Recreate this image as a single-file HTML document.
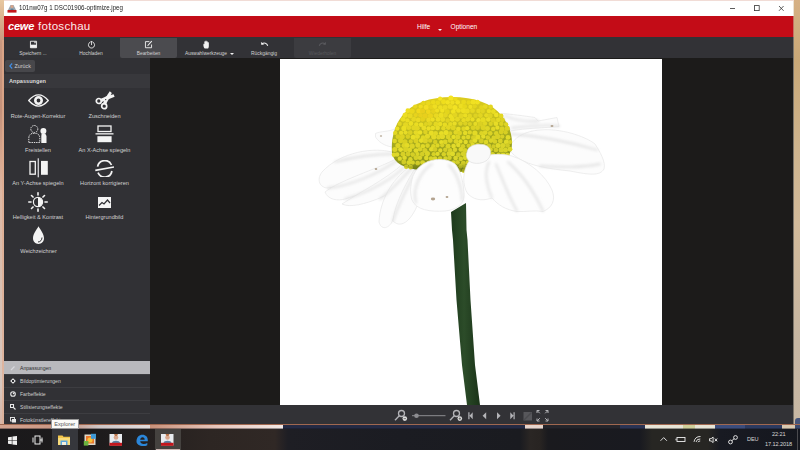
<!DOCTYPE html>
<html lang="de">
<head>
<meta charset="utf-8">
<title>101nw07g 1 DSC01906-optimize.jpeg</title>
<style>
*{margin:0;padding:0;box-sizing:border-box}
html,body{width:800px;height:450px;overflow:hidden}
body{position:relative;font-family:"Liberation Sans",sans-serif;background:#d9b48c;color:#fff}
.abs{position:absolute}
#desk-l{left:0;top:0;width:5px;height:428px;background:linear-gradient(#e8c8a0 0%,#d8ac8c 5%,#c89880 10%,#c4917a 26%,#d8aa92 38%,#deb8a4 45%,#d8c0b2 66%,#d8c8c0 90%,#d8b4a4 100%)}
#desk-r{left:793px;top:0;width:7px;height:428px;background:linear-gradient(#d6b084 0%,#c9a877 14%,#ceb48e 35%,#d2ba9a 52%,#c6b6a2 80%,#c8b8a4 100%)}
#desk-t{left:4px;top:0;width:790px;height:2px;background:#f1dcd6}
#desk-b{left:0;top:424px;width:800px;height:5px;z-index:3}
#tip{z-index:4}
#win{left:4px;top:1px;width:789px;height:423px;background:#1c1b1a;overflow:hidden}
#title{left:0;top:0;width:790px;height:15px;background:#fff;color:#222;font-size:7.6px;line-height:15px}
#title .t{left:15px;top:0;white-space:nowrap;transform-origin:0 50%;transform:scaleX(0.87);font-size:7.1px}
#red{left:0;top:15px;width:790px;height:21px;background:#c30c17}
#tool{left:0;top:36px;width:790px;height:21px;background:#323236}
.tb{top:0;height:21px;width:58px;text-align:center;font-size:5.4px;color:#d2d2d2}
.tb span{position:absolute;left:0;right:0;top:13px;line-height:7px;font-size:4.900px}
.tb svg{position:absolute;left:24.500px;top:2.500px;width:9px;height:9px}
#panel{left:0;top:57px;width:146px;height:366px;background:#313135}
#canvas{left:146px;top:57px;width:644px;height:347px;background:#1c1b1a}
#img{left:276px;top:58px;width:382px;height:346px;background:#fff}
#bbar{left:146px;top:404px;width:644px;height:19px;background:#323236}
#task{left:0;top:428px;width:800px;height:22px;background:linear-gradient(90deg,#1a191b 0,#1d1b1c 100px,#262120 160px,#2d2623 210px,#302825 275px,#1e1e24 288px,#1b1c22 400px,#1a1b20 520px,#2a2624 530px,#282422 540px,#1a1a1e 548px,#191a20 640px,#272623 652px,#272623 708px,#181a22 720px,#15171e 800px)}
.lbl{font-size:5.6px;color:#d2d2d2;white-space:nowrap;text-align:center;width:73px;line-height:7px}
.row{left:0;width:146px;height:13px;border-top:1px solid #3d3d41;font-size:5.1px;line-height:12px;color:#cecece;padding-left:16px}

.logo1{left:4px;top:3px;font-weight:bold;font-style:italic;font-size:11px;line-height:14px;letter-spacing:-0.2px}
.logo2{left:34px;top:2.5px;font-size:11.6px;line-height:14px;letter-spacing:0.25px;color:#fbeaea}
.menu{top:6.5px;font-size:6.6px;line-height:8px;color:#fff}
.arr{width:0;height:0;border-left:2px solid transparent;border-right:2px solid transparent;border-top:2.200px solid #f0f0f0}
.tb.on{background:#4b4b4f;top:1px;height:20px;border-radius:0 0 2px 2px}
.tb.on svg{top:1.500px;left:24px}.tb.on span{top:12px}
.tb.off{background:#3c3c40;top:1px;height:20px;border-radius:0 0 2px 2px;color:#58585c}
.tb.off svg{top:1.500px;left:24px}.tb.off span{top:12px}

.back{left:1px;top:2px;width:30px;height:12px;background:#47474b;border-radius:2px;font-size:5.400px;line-height:7px;color:#cfcfd2}
.hdr{left:0;top:16px;width:146px;height:14px;background:#38383c;font-size:5.600px;font-weight:bold;line-height:7px;color:#dcdcdc}
.row.sel{background:#b9b9bd;color:#2c2c30;border-top-color:#b9b9bd}

.tt{font-size:5.600px;line-height:7px;color:#d6d6d6;white-space:nowrap;letter-spacing:-0.100px}
#tip{left:51px;top:419px;width:27.500px;height:9.500px;background:#fbfbf8;border:0.500px solid #9a9a9a;color:#555;font-size:5.600px;line-height:8px;text-align:center}
</style>
</head>
<body>
<div id="desk-l" class="abs"></div>
<div id="desk-r" class="abs"></div><div class="abs" style="left:795px;top:418px;width:5px;height:8px;background:#46557a;border-radius:3px 0 0 0"></div>
<div id="desk-t" class="abs"></div>
<div class="abs" style="left:793px;top:1px;width:1px;height:423px;background:linear-gradient(#ece2d4 0,#ece2d4 15px,#c47264 15px,#c47264 36px,#7c766c 36px)"></div>
<div class="abs" style="left:2px;top:40px;width:2px;height:384px;background:linear-gradient(rgba(224,168,136,.7),rgba(222,176,152,.8))"></div>
<svg id="desk-b" class="abs" viewBox="0 424 800 5" preserveAspectRatio="none">
<defs><linearGradient id="sg1" x1="0" x2="1"><stop offset="0" stop-color="#d3a38f"/><stop offset="0.45" stop-color="#c99683"/><stop offset="0.66" stop-color="#cfc6c6"/><stop offset="1" stop-color="#e3dcdc"/></linearGradient>
<linearGradient id="sg2" x1="0" x2="1"><stop offset="0" stop-color="#c8917a"/><stop offset="0.5" stop-color="#e7c6bc"/><stop offset="1" stop-color="#f3e9e6"/></linearGradient></defs>
<rect x="0" y="424" width="800" height="5" fill="#a06850"/>
<rect x="0" y="425" width="150" height="4" fill="url(#sg1)"/>
<rect x="150" y="425" width="133" height="4" fill="url(#sg2)"/>
<rect x="283" y="425" width="242" height="4" fill="#242a44"/>
<rect x="525" y="425" width="18" height="4" fill="#e6d4cc"/>
<rect x="543" y="425" width="77" height="4" fill="#25252b"/>
<rect x="620" y="425" width="25" height="4" fill="#2a3354"/>
<rect x="645" y="425" width="70" height="4" fill="#e7e4d6"/>
<rect x="683" y="425" width="12" height="4" fill="#cfcf9a"/>
<rect x="715" y="425" width="30" height="4" fill="#3b4c7c"/>
<rect x="745" y="425" width="37" height="4" fill="#2c3a60"/>
<rect x="782" y="425" width="13" height="4" fill="#d9c9b0"/>
<rect x="795" y="425" width="5" height="4" fill="#3a4a70"/>
<rect x="0" y="428.600" width="800" height="1" fill="#15161c"/>
</svg>
<div id="win" class="abs">
  <div id="title" class="abs">
    <svg class="abs" style="left:3px;top:3px;width:10px;height:9px" viewBox="0 0 10 9"><rect x="0.5" y="6" width="9" height="2.6" fill="#c4161c"/><path d="M1 6 L3.5 1 L6.5 1 L9 6 Z" fill="#9aa4ad"/><circle cx="5" cy="2.6" r="1.5" fill="#d8a58a"/><path d="M3 6 Q5 3 7 6Z" fill="#5c7c96"/></svg>
    <span class="abs t">101nw07g 1 DSC01906-optimize.jpeg</span>
    <svg class="abs" style="left:722px;top:0;width:68px;height:15px" viewBox="0 0 68 15"><g stroke="#333" stroke-width="0.8" fill="none"><path d="M4 7.5h5"/><rect x="28.4" y="4.6" width="4.8" height="5"/><path d="M53 5l4.6 4.8M57.6 5L53 9.8"/></g></svg>
  </div>
  <div id="red" class="abs">
    <span class="abs logo1">cewe</span><span class="abs logo2">fotoschau</span>
    <span class="abs menu" style="left:413px">Hilfe</span>
    <span class="abs arr" style="left:433.5px;top:12.5px"></span>
    <span class="abs menu" style="left:446.5px">Optionen</span>
  </div>
  <div id="tool" class="abs">
    <div class="abs tb" style="left:0">
      <svg viewBox="0 0 10 10"><path d="M1.6 1.4h6.8v7.2H1.6z" fill="none" stroke="#f2f2f2" stroke-width="1"/><rect x="1.6" y="5.2" width="6.8" height="3.4" fill="#f2f2f2"/><rect x="6" y="1.6" width="1.4" height="2" fill="#f2f2f2"/></svg>
      <span>Speichern ...</span></div>
    <div class="abs tb" style="left:58px">
      <svg viewBox="0 0 10 10"><path d="M3.2 2.6A3.4 3.4 0 1 0 6.8 2.6" fill="none" stroke="#f2f2f2" stroke-width="1"/><path d="M5 5.6V1.4M3.4 2.8L5 1.1l1.6 1.7" fill="none" stroke="#f2f2f2" stroke-width="0.9"/></svg>
      <span>Hochladen</span></div>
    <div class="abs tb on" style="left:116px;width:57px">
      <svg viewBox="0 0 10 10"><path d="M6 1.8H1.6v6.8h6.8V5" fill="none" stroke="#f2f2f2" stroke-width="1"/><path d="M4 6.4L8.6 1.2" stroke="#f2f2f2" stroke-width="1.2"/></svg>
      <span>Bearbeiten</span></div>
    <div class="abs tb" style="left:173px">
      <svg viewBox="0 0 10 10"><path d="M3 9.4C1.6 7.6 1.4 6 1.6 4.6c.3-.6.9-.4 1 .2V2c.1-.8 1.1-.8 1.2 0V1.200c.1-.8 1.200-.8 1.300 0V2c.1-.8 1.200-.8 1.300 0v1c.1-.7 1.100-.7 1.200 0V7c0 1-.4 1.800-.8 2.400z" fill="#f2f2f2"/></svg>
      <span>Auswahlwerkzeuge</span><i class="abs arr" style="left:52.5px;top:16px"></i></div>
    <div class="abs tb" style="left:231px">
      <svg viewBox="0 0 10 10"><path d="M2.200 4.200C4.600 2.600 7.600 3.400 8.600 6.400" fill="none" stroke="#f2f2f2" stroke-width="1.2"/><path d="M1 2.200l.6 3.400 3.200-1z" fill="#f2f2f2"/></svg>
      <span>Rückgängig</span></div>
    <div class="abs tb off" style="left:290px;width:57px">
      <svg viewBox="0 0 10 10"><path d="M7.800 4.200C5.400 2.600 2.400 3.400 1.400 6.400" fill="none" stroke="#5a5a5e" stroke-width="1.2"/><path d="M9 2.200l-.6 3.400-3.200-1z" fill="#5a5a5e"/></svg>
      <span>Wiederholen</span></div>
  </div>
  <div id="canvas" class="abs"></div>
  <div id="img" class="abs"><svg class="abs" style="left:0;top:0;width:382px;height:346px" viewBox="280 59 382 346">
<defs>
<radialGradient id="gy" cx="0.34" cy="0.22" r="0.85"><stop offset="0" stop-color="#f4e01c"/><stop offset="0.3" stop-color="#e6d820"/><stop offset="0.62" stop-color="#cdc824"/><stop offset="1" stop-color="#a9ad22"/></radialGradient>
<linearGradient id="gs" x1="0" x2="1" y1="0" y2="0"><stop offset="0" stop-color="#1d3a1c"/><stop offset="0.45" stop-color="#2c4c29"/><stop offset="1" stop-color="#1a3318"/></linearGradient>
<linearGradient id="gm" x1="0.3" x2="0.6" y1="0" y2="1"><stop offset="0" stop-color="#fff" stop-opacity="0.050"/><stop offset="0.35" stop-color="#fff" stop-opacity="0.450"/><stop offset="1" stop-color="#fff" stop-opacity="1"/></linearGradient>
<filter id="bl" x="-10%" y="-10%" width="120%" height="120%"><feGaussianBlur stdDeviation="1.500"/></filter>
<linearGradient id="gg" x1="0" x2="0.150" y1="0" y2="1"><stop offset="0" stop-color="#e2cf1e"/><stop offset="0.300" stop-color="#cfc41f"/><stop offset="0.600" stop-color="#a8ac1f"/><stop offset="1" stop-color="#848e1b"/></linearGradient><filter id="bl4" x="-5%" y="-5%" width="110%" height="110%"><feGaussianBlur stdDeviation="0.650"/></filter><filter id="bl2" x="-10%" y="-10%" width="120%" height="120%"><feGaussianBlur stdDeviation="0.600"/></filter>
<filter id="bl3" x="-5%" y="-5%" width="110%" height="110%"><feTurbulence type="fractalNoise" baseFrequency="0.120" numOctaves="2" seed="7" result="n"/><feDisplacementMap in="SourceGraphic" in2="n" scale="4.500" xChannelSelector="R" yChannelSelector="G"/><feGaussianBlur stdDeviation="0.400"/></filter>
<pattern id="dots" width="4.600" height="4" patternUnits="userSpaceOnUse" patternTransform="rotate(-8)"><rect width="4.600" height="4" fill="#8e961a"/><circle cx="1.150" cy="1" r="1.450" fill="#e8de2c"/><circle cx="3.450" cy="3" r="1.450" fill="#dcd62a"/><circle cx="1.150" cy="5" r="1.450" fill="#e8de2c"/><circle cx="5.750" cy="1" r="1.450" fill="#e8de2c"/><circle cx="-1.150" cy="3" r="1.450" fill="#dcd62a"/></pattern>
<mask id="mk"><rect x="385" y="90" width="135" height="90" fill="url(#gm)"/></mask>
<clipPath id="cd"><path id="dome" d="M392 153C391 140 394 126 402 116C412 103 430 97 452 97C474 97 492 103 502 116C509 125 512 134 512 143C512 152 508 160 498 163L470 172L420 170C405 168 394 164 392 153Z"/></clipPath>
</defs>
<!-- stem -->
<path d="M451 212L466 203L466.500 230L467.500 240L470.500 300L475 365L480 405L467 405L462 365L456.500 300L453 240L452 230Z" fill="url(#gs)"/>
<!-- back petals -->
<g fill="#fcfcfc" stroke="#e6e6e6" stroke-width="0.700">
<path d="M375.500 133.500C380 131 390 132 395 128.500L394 147C388 147 380 144 375.500 137Z"/>
<path d="M502 113.500C510 114 525 116 535 117.500L538 121L557 117.500L559 126.500C545 128 525 128 511 131Z"/>
<path d="M510 148C512 138 525 131 540 130C560 128 585 136 595 144C600 152 606 162 604 169C600 176 590 175 570 171C550 169 530 166 518 158C512 154 510 151 510 148Z"/>
<path d="M395 153C375 146 340 152 322 172C316 180 320 188 328 188C350 186 380 172 398 160Z"/>
<path d="M398 158C375 170 340 180 325 192C328 200 338 201 345 199C370 192 395 178 406 165Z"/>
<path d="M404 163C385 180 360 192 342 204C350 208 365 204 380 198C398 190 410 176 414 166Z"/>
<path d="M408 168C392 180 380 200 379 222C381 230 388 229 392 222C398 205 408 185 416 170Z"/>
<path d="M414 170C402 190 394 208 393 221C398 226 404 225 410 218C418 208 422 195 422 175Z"/>
</g>
<!-- soft shading on back petals -->
<g filter="url(#bl)" fill="none" stroke="#dedede" stroke-width="1.800" stroke-linecap="round">
<path d="M328 188C350 186 378 174 398 160"/>
<path d="M345 199C370 192 395 178 406 165"/>
<path d="M380 199C392 190 402 178 412 168"/>
<path d="M393 221C398 205 408 186 416 171"/>
<path d="M511 134C540 136 570 142 597 150"/>
<path d="M540 166C560 167 580 168 600 164"/>
<path d="M512 128C528 126 545 124 559 126"/>
<path d="M505 116C515 120 528 122 538 121"/>
<path d="M335 162C350 158 372 154 394 154"/>
</g>
<!-- dome -->
<use href="#dome" fill="url(#gg)"/>
<g filter="url(#bl4)" id="florets"><circle cx="440.1" cy="98.7" r="2.12" fill="#f5e420"/><circle cx="450.9" cy="98.0" r="2.59" fill="#f5e420"/><circle cx="455.5" cy="99.1" r="2.14" fill="#ebda1e"/><circle cx="423.4" cy="103.0" r="2.13" fill="#e7d61c"/><circle cx="428.3" cy="103.3" r="2.33" fill="#ead91e"/><circle cx="433.2" cy="102.3" r="2.26" fill="#ecdb1e"/><circle cx="437.8" cy="102.8" r="2.29" fill="#eada1e"/><circle cx="443.5" cy="101.8" r="2.47" fill="#efde1f"/><circle cx="447.7" cy="102.2" r="2.22" fill="#f2e221"/><circle cx="452.4" cy="102.5" r="2.15" fill="#f0e020"/><circle cx="457.7" cy="102.3" r="2.32" fill="#f2e221"/><circle cx="463.6" cy="102.1" r="2.43" fill="#eada1f"/><circle cx="468.7" cy="102.5" r="2.16" fill="#e8d81f"/><circle cx="473.1" cy="102.1" r="2.52" fill="#f1e121"/><circle cx="477.4" cy="102.2" r="2.42" fill="#f1e121"/><circle cx="415.1" cy="106.6" r="2.13" fill="#e9d71d"/><circle cx="420.7" cy="106.6" r="2.12" fill="#f2dd1f"/><circle cx="426.2" cy="107.2" r="2.55" fill="#f3dd20"/><circle cx="431.2" cy="107.0" r="2.47" fill="#e6d21d"/><circle cx="434.9" cy="106.6" r="2.36" fill="#efde20"/><circle cx="440.3" cy="107.6" r="2.27" fill="#edde21"/><circle cx="445.1" cy="107.5" r="2.49" fill="#ebdb20"/><circle cx="450.2" cy="106.4" r="2.51" fill="#ecdc20"/><circle cx="454.9" cy="107.4" r="2.50" fill="#f2e222"/><circle cx="461.1" cy="106.1" r="2.53" fill="#edde21"/><circle cx="464.7" cy="106.5" r="2.36" fill="#e7d81f"/><circle cx="470.4" cy="106.9" r="2.10" fill="#efe022"/><circle cx="474.7" cy="106.3" r="2.13" fill="#e4d51f"/><circle cx="481.4" cy="107.5" r="2.35" fill="#e3d41f"/><circle cx="485.2" cy="106.6" r="2.42" fill="#e7d920"/><circle cx="490.7" cy="106.7" r="2.26" fill="#e4d620"/><circle cx="407.9" cy="110.8" r="2.45" fill="#eddd20"/><circle cx="412.2" cy="111.1" r="2.54" fill="#ebd81f"/><circle cx="418.8" cy="111.0" r="2.50" fill="#f1d91f"/><circle cx="422.6" cy="111.1" r="2.51" fill="#e9cf1c"/><circle cx="428.3" cy="111.8" r="2.43" fill="#efd61e"/><circle cx="433.4" cy="111.3" r="2.39" fill="#e6d21d"/><circle cx="437.1" cy="110.6" r="2.12" fill="#efde21"/><circle cx="442.3" cy="110.6" r="2.19" fill="#f0e122"/><circle cx="447.1" cy="111.7" r="2.52" fill="#e3d51f"/><circle cx="453.3" cy="111.7" r="2.39" fill="#f0e223"/><circle cx="458.5" cy="110.5" r="2.36" fill="#eedf22"/><circle cx="463.4" cy="110.6" r="2.57" fill="#eddf22"/><circle cx="467.2" cy="110.9" r="2.51" fill="#eadc22"/><circle cx="472.5" cy="110.7" r="2.41" fill="#e5d720"/><circle cx="478.5" cy="111.0" r="2.30" fill="#e6d821"/><circle cx="482.7" cy="111.1" r="2.35" fill="#e1d420"/><circle cx="488.9" cy="111.1" r="2.18" fill="#ebde23"/><circle cx="493.3" cy="111.6" r="2.36" fill="#eadd23"/><circle cx="405.2" cy="115.1" r="2.58" fill="#edde21"/><circle cx="410.1" cy="115.8" r="2.53" fill="#e9d920"/><circle cx="415.7" cy="115.1" r="2.11" fill="#e8d31e"/><circle cx="420.5" cy="115.3" r="2.28" fill="#e8d01d"/><circle cx="425.2" cy="115.9" r="2.60" fill="#e8cf1d"/><circle cx="430.5" cy="115.7" r="2.52" fill="#ead41f"/><circle cx="436.1" cy="115.6" r="2.46" fill="#e9d820"/><circle cx="441.1" cy="115.3" r="2.58" fill="#ecde23"/><circle cx="445.4" cy="115.1" r="2.46" fill="#e4d620"/><circle cx="450.8" cy="116.2" r="2.22" fill="#ede024"/><circle cx="454.9" cy="115.1" r="2.45" fill="#e3d520"/><circle cx="461.1" cy="116.1" r="2.53" fill="#e3d621"/><circle cx="465.2" cy="115.4" r="2.14" fill="#ebde23"/><circle cx="469.8" cy="116.0" r="2.28" fill="#e3d621"/><circle cx="475.6" cy="115.8" r="2.27" fill="#ded220"/><circle cx="480.4" cy="115.5" r="2.39" fill="#e2d521"/><circle cx="486.3" cy="115.3" r="2.16" fill="#e7da23"/><circle cx="490.1" cy="115.8" r="2.54" fill="#dfd321"/><circle cx="496.2" cy="114.9" r="2.29" fill="#ede025"/><circle cx="501.0" cy="115.9" r="2.44" fill="#e2d622"/><circle cx="403.1" cy="119.3" r="2.42" fill="#ebdd22"/><circle cx="407.4" cy="120.4" r="2.16" fill="#ebdd22"/><circle cx="413.8" cy="119.2" r="2.46" fill="#e6d720"/><circle cx="418.2" cy="119.9" r="2.33" fill="#ebda21"/><circle cx="422.7" cy="119.3" r="2.46" fill="#e4d11e"/><circle cx="428.5" cy="119.9" r="2.28" fill="#ecda22"/><circle cx="432.6" cy="119.6" r="2.12" fill="#edde23"/><circle cx="438.0" cy="119.4" r="2.28" fill="#ebde23"/><circle cx="442.7" cy="119.6" r="2.49" fill="#e7da23"/><circle cx="447.7" cy="120.4" r="2.24" fill="#e0d321"/><circle cx="452.3" cy="119.2" r="2.46" fill="#ebde24"/><circle cx="457.4" cy="119.3" r="2.47" fill="#e5d822"/><circle cx="463.6" cy="120.2" r="2.17" fill="#e7da23"/><circle cx="467.8" cy="119.3" r="2.38" fill="#e6da23"/><circle cx="472.5" cy="119.4" r="2.12" fill="#eadd24"/><circle cx="478.5" cy="120.4" r="2.29" fill="#ebe026"/><circle cx="483.1" cy="119.9" r="2.59" fill="#e6db24"/><circle cx="488.3" cy="119.5" r="2.34" fill="#eade25"/><circle cx="493.2" cy="120.2" r="2.49" fill="#dcd021"/><circle cx="498.3" cy="119.8" r="2.33" fill="#e4d924"/><circle cx="502.4" cy="119.8" r="2.35" fill="#dcd122"/><circle cx="399.7" cy="123.9" r="2.14" fill="#e3d621"/><circle cx="405.6" cy="124.8" r="2.54" fill="#e4d722"/><circle cx="410.9" cy="123.5" r="2.40" fill="#ecdf24"/><circle cx="416.3" cy="124.4" r="2.27" fill="#eadd24"/><circle cx="421.1" cy="124.8" r="2.32" fill="#ebdf25"/><circle cx="426.0" cy="124.1" r="2.12" fill="#dfd321"/><circle cx="429.7" cy="123.6" r="2.35" fill="#e0d421"/><circle cx="435.9" cy="124.2" r="2.42" fill="#e4d823"/><circle cx="440.1" cy="124.0" r="2.30" fill="#e9dd24"/><circle cx="444.9" cy="124.7" r="2.28" fill="#e8dc24"/><circle cx="450.3" cy="124.1" r="2.21" fill="#e6da24"/><circle cx="454.6" cy="123.6" r="2.17" fill="#e9dd25"/><circle cx="460.4" cy="123.6" r="2.19" fill="#dfd422"/><circle cx="465.3" cy="123.6" r="2.16" fill="#dcd121"/><circle cx="469.9" cy="124.1" r="2.11" fill="#dcd122"/><circle cx="475.4" cy="124.0" r="2.13" fill="#e6db25"/><circle cx="480.3" cy="123.9" r="2.58" fill="#dbd022"/><circle cx="485.0" cy="123.5" r="2.18" fill="#e2d724"/><circle cx="490.7" cy="123.9" r="2.13" fill="#dcd223"/><circle cx="495.9" cy="123.7" r="2.33" fill="#e7dc26"/><circle cx="501.3" cy="123.8" r="2.23" fill="#ded323"/><circle cx="506.1" cy="124.3" r="2.15" fill="#dfd524"/><circle cx="397.2" cy="128.6" r="2.20" fill="#ece025"/><circle cx="403.9" cy="128.4" r="2.56" fill="#eade24"/><circle cx="408.8" cy="127.7" r="2.40" fill="#e2d622"/><circle cx="413.8" cy="127.7" r="2.52" fill="#e2d622"/><circle cx="417.3" cy="128.2" r="2.44" fill="#e2d623"/><circle cx="423.8" cy="127.9" r="2.47" fill="#e8dc25"/><circle cx="428.6" cy="128.5" r="2.28" fill="#ebdf26"/><circle cx="432.8" cy="128.0" r="2.34" fill="#e8dd25"/><circle cx="437.6" cy="127.9" r="2.40" fill="#e7dc25"/><circle cx="443.4" cy="128.2" r="2.18" fill="#e3d824"/><circle cx="448.4" cy="127.6" r="2.48" fill="#e3d724"/><circle cx="453.3" cy="127.8" r="2.52" fill="#dfd423"/><circle cx="458.3" cy="129.0" r="2.32" fill="#e8dd26"/><circle cx="463.7" cy="128.8" r="2.29" fill="#dfd524"/><circle cx="467.2" cy="128.2" r="2.15" fill="#e9df27"/><circle cx="473.1" cy="127.8" r="2.42" fill="#dbd123"/><circle cx="477.5" cy="127.7" r="2.42" fill="#dcd223"/><circle cx="483.2" cy="127.6" r="2.58" fill="#ddd324"/><circle cx="487.5" cy="128.5" r="2.49" fill="#dfd625"/><circle cx="493.2" cy="128.9" r="2.19" fill="#e1d725"/><circle cx="497.4" cy="127.7" r="2.16" fill="#e6dc27"/><circle cx="502.1" cy="129.1" r="2.55" fill="#dbd224"/><circle cx="507.3" cy="128.3" r="2.51" fill="#dbd224"/><circle cx="395.2" cy="132.9" r="2.16" fill="#e3d823"/><circle cx="401.1" cy="132.9" r="2.20" fill="#e9dd25"/><circle cx="405.6" cy="132.6" r="2.14" fill="#e7dc25"/><circle cx="410.2" cy="132.7" r="2.38" fill="#dcd122"/><circle cx="415.9" cy="132.6" r="2.40" fill="#e5da25"/><circle cx="420.0" cy="132.5" r="2.27" fill="#ebe027"/><circle cx="425.4" cy="132.0" r="2.18" fill="#ded323"/><circle cx="431.3" cy="133.1" r="2.59" fill="#e8dd26"/><circle cx="435.7" cy="133.4" r="2.31" fill="#e2d825"/><circle cx="441.3" cy="133.3" r="2.34" fill="#e8de27"/><circle cx="446.0" cy="132.6" r="2.56" fill="#e9df27"/><circle cx="450.1" cy="133.4" r="2.15" fill="#dcd224"/><circle cx="455.9" cy="132.4" r="2.42" fill="#e1d725"/><circle cx="459.7" cy="133.1" r="2.32" fill="#ddd324"/><circle cx="465.2" cy="133.1" r="2.24" fill="#e4db27"/><circle cx="469.8" cy="132.4" r="2.14" fill="#dfd525"/><circle cx="474.9" cy="133.1" r="2.59" fill="#e3da27"/><circle cx="481.4" cy="133.3" r="2.18" fill="#ddd425"/><circle cx="485.2" cy="132.6" r="2.37" fill="#dfd726"/><circle cx="490.2" cy="133.3" r="2.33" fill="#dbd225"/><circle cx="496.2" cy="133.2" r="2.22" fill="#dbd325"/><circle cx="501.1" cy="131.9" r="2.37" fill="#d9d024"/><circle cx="505.6" cy="132.2" r="2.20" fill="#d7cf24"/><circle cx="397.9" cy="136.7" r="2.37" fill="#dbd022"/><circle cx="402.3" cy="136.7" r="2.50" fill="#ded323"/><circle cx="407.9" cy="136.6" r="2.31" fill="#dad022"/><circle cx="413.2" cy="137.3" r="2.50" fill="#e8de27"/><circle cx="417.5" cy="136.4" r="2.49" fill="#e5db26"/><circle cx="423.0" cy="137.5" r="2.24" fill="#e1d825"/><circle cx="427.4" cy="136.2" r="2.55" fill="#e3d926"/><circle cx="433.7" cy="136.9" r="2.56" fill="#e3d926"/><circle cx="438.6" cy="137.2" r="2.36" fill="#ded525"/><circle cx="442.4" cy="136.5" r="2.60" fill="#e3d926"/><circle cx="448.1" cy="136.9" r="2.33" fill="#ddd425"/><circle cx="453.5" cy="136.9" r="2.18" fill="#e6de28"/><circle cx="457.7" cy="137.0" r="2.53" fill="#ddd526"/><circle cx="463.6" cy="137.7" r="2.12" fill="#e0d827"/><circle cx="468.1" cy="137.1" r="2.24" fill="#ded626"/><circle cx="473.4" cy="137.7" r="2.43" fill="#d7cf25"/><circle cx="477.8" cy="137.0" r="2.58" fill="#e4dc28"/><circle cx="483.3" cy="136.5" r="2.19" fill="#e4dc29"/><circle cx="487.8" cy="137.5" r="2.24" fill="#dad226"/><circle cx="493.8" cy="137.7" r="2.30" fill="#dad226"/><circle cx="497.6" cy="136.4" r="2.59" fill="#d9d126"/><circle cx="502.2" cy="136.6" r="2.14" fill="#d8d026"/><circle cx="508.0" cy="137.4" r="2.42" fill="#e1da29"/><circle cx="394.7" cy="140.9" r="2.23" fill="#e0d725"/><circle cx="400.6" cy="140.6" r="2.58" fill="#dcd324"/><circle cx="404.9" cy="141.9" r="2.60" fill="#dad124"/><circle cx="410.8" cy="141.5" r="2.13" fill="#dad124"/><circle cx="416.0" cy="140.8" r="2.51" fill="#dbd124"/><circle cx="421.2" cy="140.6" r="2.37" fill="#e7de28"/><circle cx="425.3" cy="140.7" r="2.59" fill="#ddd425"/><circle cx="430.1" cy="140.7" r="2.16" fill="#d9d024"/><circle cx="435.2" cy="142.0" r="2.20" fill="#d7cf24"/><circle cx="441.3" cy="142.1" r="2.22" fill="#e5dd29"/><circle cx="445.2" cy="142.0" r="2.45" fill="#ddd526"/><circle cx="450.2" cy="140.5" r="2.47" fill="#dbd326"/><circle cx="456.0" cy="141.4" r="2.37" fill="#ddd527"/><circle cx="460.4" cy="141.4" r="2.20" fill="#e2db28"/><circle cx="465.7" cy="142.0" r="2.19" fill="#e2db29"/><circle cx="471.3" cy="141.8" r="2.23" fill="#d7cf26"/><circle cx="475.0" cy="140.6" r="2.30" fill="#e4dd29"/><circle cx="481.2" cy="140.7" r="2.53" fill="#d4cd25"/><circle cx="486.0" cy="142.1" r="2.36" fill="#ded728"/><circle cx="491.0" cy="140.6" r="2.32" fill="#dcd528"/><circle cx="494.9" cy="141.5" r="2.35" fill="#d8d127"/><circle cx="500.3" cy="141.0" r="2.40" fill="#d9d227"/><circle cx="506.4" cy="142.0" r="2.52" fill="#e0da2a"/><circle cx="510.1" cy="142.1" r="2.16" fill="#d6d027"/><circle cx="397.9" cy="145.6" r="2.54" fill="#dfd626"/><circle cx="403.9" cy="145.6" r="2.41" fill="#ddd526"/><circle cx="407.2" cy="145.5" r="2.49" fill="#e4db28"/><circle cx="412.2" cy="146.2" r="2.59" fill="#dcd426"/><circle cx="417.8" cy="145.1" r="2.54" fill="#ded627"/><circle cx="422.9" cy="146.2" r="2.28" fill="#e0d928"/><circle cx="427.6" cy="145.6" r="2.29" fill="#dbd426"/><circle cx="433.3" cy="146.2" r="2.17" fill="#ded627"/><circle cx="437.5" cy="145.4" r="2.17" fill="#ded728"/><circle cx="442.2" cy="145.3" r="2.11" fill="#d9d126"/><circle cx="448.1" cy="146.3" r="2.47" fill="#dcd528"/><circle cx="453.6" cy="146.1" r="2.32" fill="#e2db2a"/><circle cx="458.3" cy="145.0" r="2.29" fill="#e2db29"/><circle cx="463.0" cy="146.2" r="2.19" fill="#d7d127"/><circle cx="468.6" cy="145.8" r="2.11" fill="#d4ce26"/><circle cx="472.7" cy="144.8" r="2.19" fill="#e0da29"/><circle cx="477.6" cy="145.4" r="2.32" fill="#dbd428"/><circle cx="483.2" cy="145.9" r="2.15" fill="#d9d328"/><circle cx="488.9" cy="145.9" r="2.32" fill="#d3cd26"/><circle cx="493.5" cy="146.4" r="2.10" fill="#d2cc26"/><circle cx="498.0" cy="145.5" r="2.51" fill="#e0da2a"/><circle cx="502.7" cy="145.5" r="2.54" fill="#dad529"/><circle cx="507.5" cy="145.4" r="2.42" fill="#d2cd27"/><circle cx="394.8" cy="149.5" r="2.53" fill="#ddd527"/><circle cx="400.6" cy="149.6" r="2.43" fill="#e5dd29"/><circle cx="405.6" cy="149.4" r="2.55" fill="#d9d226"/><circle cx="409.8" cy="150.0" r="2.28" fill="#ded728"/><circle cx="416.0" cy="150.6" r="2.47" fill="#e1da29"/><circle cx="420.0" cy="149.2" r="2.26" fill="#dbd427"/><circle cx="424.9" cy="150.5" r="2.51" fill="#d7d026"/><circle cx="431.3" cy="149.3" r="2.30" fill="#e2db2a"/><circle cx="435.0" cy="149.4" r="2.35" fill="#d4cd25"/><circle cx="440.3" cy="150.5" r="2.13" fill="#e0d92a"/><circle cx="445.3" cy="149.7" r="2.23" fill="#d5cf26"/><circle cx="450.1" cy="150.2" r="2.16" fill="#d7d127"/><circle cx="455.0" cy="149.8" r="2.22" fill="#dbd529"/><circle cx="460.9" cy="149.4" r="2.40" fill="#dcd629"/><circle cx="464.9" cy="150.3" r="2.37" fill="#d7d228"/><circle cx="470.7" cy="150.1" r="2.13" fill="#d8d228"/><circle cx="476.0" cy="150.5" r="2.39" fill="#d8d329"/><circle cx="480.1" cy="150.5" r="2.21" fill="#dbd62a"/><circle cx="486.1" cy="150.7" r="2.60" fill="#d5d028"/><circle cx="490.5" cy="149.4" r="2.27" fill="#dbd62a"/><circle cx="495.9" cy="150.0" r="2.36" fill="#d1cc27"/><circle cx="501.1" cy="149.9" r="2.53" fill="#d8d32a"/><circle cx="505.4" cy="149.9" r="2.51" fill="#d8d42a"/><circle cx="510.0" cy="149.2" r="2.38" fill="#dbd72b"/><circle cx="393.9" cy="154.7" r="2.25" fill="#dfd829"/><circle cx="397.1" cy="154.5" r="2.28" fill="#dfd829"/><circle cx="403.0" cy="154.3" r="2.45" fill="#d7d027"/><circle cx="408.1" cy="154.0" r="2.38" fill="#d4ce26"/><circle cx="412.7" cy="154.6" r="2.30" fill="#d5cf27"/><circle cx="417.5" cy="154.1" r="2.15" fill="#dbd528"/><circle cx="422.2" cy="154.2" r="2.35" fill="#d5cf27"/><circle cx="427.4" cy="153.6" r="2.56" fill="#dad428"/><circle cx="433.7" cy="154.2" r="2.13" fill="#d8d228"/><circle cx="437.6" cy="153.9" r="2.16" fill="#e0da2b"/><circle cx="443.8" cy="154.2" r="2.23" fill="#d8d228"/><circle cx="448.8" cy="153.7" r="2.36" fill="#dad429"/><circle cx="452.5" cy="153.8" r="2.50" fill="#e0db2b"/><circle cx="458.4" cy="154.8" r="2.45" fill="#d1cc27"/><circle cx="463.5" cy="153.8" r="2.59" fill="#d7d229"/><circle cx="467.7" cy="154.6" r="2.43" fill="#d2cd28"/><circle cx="472.6" cy="154.2" r="2.54" fill="#d5d029"/><circle cx="478.4" cy="154.2" r="2.31" fill="#dad52b"/><circle cx="483.5" cy="153.8" r="2.39" fill="#d7d32a"/><circle cx="487.8" cy="153.5" r="2.42" fill="#d1cd28"/><circle cx="492.5" cy="154.6" r="2.58" fill="#d6d22a"/><circle cx="498.6" cy="154.6" r="2.12" fill="#d4d029"/><circle cx="503.1" cy="154.6" r="2.20" fill="#ddd92c"/><circle cx="507.4" cy="155.0" r="2.34" fill="#dad62b"/><circle cx="399.8" cy="158.7" r="2.17" fill="#dfda2a"/><circle cx="404.6" cy="157.8" r="2.30" fill="#ded82a"/><circle cx="410.4" cy="159.3" r="2.23" fill="#dad529"/><circle cx="415.9" cy="157.7" r="2.45" fill="#d5d028"/><circle cx="419.9" cy="157.8" r="2.26" fill="#d9d329"/><circle cx="426.3" cy="157.9" r="2.29" fill="#ddd82a"/><circle cx="431.0" cy="158.4" r="2.26" fill="#dad52a"/><circle cx="435.0" cy="158.4" r="2.27" fill="#dcd72b"/><circle cx="440.0" cy="158.4" r="2.26" fill="#d1cc28"/><circle cx="445.6" cy="158.6" r="2.25" fill="#d8d42a"/><circle cx="449.6" cy="157.7" r="2.20" fill="#d4d029"/><circle cx="455.6" cy="158.1" r="2.40" fill="#dbd62b"/><circle cx="460.8" cy="158.9" r="2.31" fill="#d6d22a"/><circle cx="465.2" cy="157.8" r="2.35" fill="#dbd72b"/><circle cx="469.8" cy="159.2" r="2.41" fill="#d7d32a"/><circle cx="475.4" cy="157.9" r="2.18" fill="#deda2c"/><circle cx="480.3" cy="159.3" r="2.35" fill="#d0cc28"/><circle cx="485.5" cy="158.1" r="2.31" fill="#ddd92c"/><circle cx="489.6" cy="158.5" r="2.45" fill="#ceca28"/><circle cx="496.2" cy="159.1" r="2.44" fill="#cfcb28"/><circle cx="500.1" cy="158.5" r="2.25" fill="#d3cf29"/><circle cx="504.8" cy="158.7" r="2.58" fill="#cfcb28"/><circle cx="509.7" cy="159.2" r="2.14" fill="#d1cd29"/><circle cx="403.8" cy="162.0" r="2.44" fill="#d1cc27"/><circle cx="408.8" cy="162.7" r="2.38" fill="#dad62a"/><circle cx="412.8" cy="162.7" r="2.11" fill="#d8d42a"/><circle cx="417.7" cy="163.2" r="2.34" fill="#d3ce29"/><circle cx="422.6" cy="162.6" r="2.47" fill="#d9d52b"/><circle cx="428.8" cy="162.8" r="2.27" fill="#d1cd29"/><circle cx="432.2" cy="162.4" r="2.41" fill="#d7d32a"/><circle cx="437.5" cy="162.3" r="2.19" fill="#d0cc28"/><circle cx="443.0" cy="162.4" r="2.38" fill="#dcd82c"/><circle cx="447.7" cy="162.7" r="2.47" fill="#cfcb28"/><circle cx="453.5" cy="162.6" r="2.24" fill="#dad62b"/><circle cx="457.5" cy="162.4" r="2.40" fill="#d1cd29"/><circle cx="463.3" cy="163.2" r="2.48" fill="#d0cc28"/><circle cx="468.0" cy="162.6" r="2.32" fill="#d6d22a"/><circle cx="472.5" cy="162.6" r="2.46" fill="#d8d42b"/><circle cx="478.7" cy="162.3" r="2.50" fill="#dcd82c"/><circle cx="483.4" cy="163.6" r="2.49" fill="#d0cc28"/><circle cx="488.7" cy="162.2" r="2.57" fill="#d8d42a"/><circle cx="492.6" cy="163.4" r="2.32" fill="#ddd92c"/><circle cx="497.4" cy="162.3" r="2.31" fill="#dbd72c"/><circle cx="502.7" cy="162.7" r="2.23" fill="#ddd92c"/><circle cx="507.1" cy="163.5" r="2.29" fill="#d3cf29"/><circle cx="406.2" cy="166.8" r="2.21" fill="#d3cf29"/><circle cx="410.6" cy="167.2" r="2.35" fill="#d4d02a"/><circle cx="426.1" cy="166.4" r="2.20" fill="#d2ce29"/><circle cx="429.9" cy="167.8" r="2.56" fill="#dcd82c"/><circle cx="435.6" cy="166.5" r="2.13" fill="#d5d12a"/><circle cx="441.2" cy="166.7" r="2.57" fill="#d3cf29"/><circle cx="445.0" cy="167.8" r="2.43" fill="#d3cf29"/><circle cx="449.8" cy="167.7" r="2.27" fill="#d4d02a"/><circle cx="455.8" cy="167.2" r="2.16" fill="#d2ce29"/><circle cx="460.6" cy="166.3" r="2.27" fill="#dcd82c"/><circle cx="464.9" cy="166.8" r="2.26" fill="#d0cc28"/><circle cx="470.6" cy="167.0" r="2.25" fill="#d3cf29"/><circle cx="475.5" cy="167.5" r="2.48" fill="#d5d12a"/><circle cx="480.5" cy="166.5" r="2.52" fill="#d1cd28"/><circle cx="485.5" cy="166.9" r="2.52" fill="#d6d22a"/><circle cx="490.3" cy="166.9" r="2.11" fill="#d4d029"/><circle cx="495.6" cy="167.1" r="2.33" fill="#d6d22a"/><circle cx="500.5" cy="167.4" r="2.59" fill="#d1cd28"/><circle cx="504.8" cy="167.7" r="2.50" fill="#d1cd28"/><circle cx="438.3" cy="170.6" r="2.46" fill="#d1cd29"/><circle cx="448.8" cy="170.9" r="2.47" fill="#d9d52b"/><circle cx="458.4" cy="170.6" r="2.37" fill="#d1cd29"/><circle cx="463.8" cy="170.9" r="2.16" fill="#d7d32a"/><circle cx="487.6" cy="171.0" r="2.55" fill="#d1cd28"/></g>
<g clip-path="url(#cd)"><ellipse cx="446" cy="171" rx="56" ry="6" fill="#5f6e14" opacity="0.450" filter="url(#bl)"/></g>
<!-- front petals -->
<g fill="#fdfdfd" stroke="#e6e6e6" stroke-width="0.700">
<path d="M470 160C462 170 462 186 468 194C476 202 486 200 492 198C498 205 506 210 517 211.500C525 212 535 210 543 211.500C552 208 556 200 552 190C546 176 530 162 512 156C500 153 488 154 470 160Z"/>
<path d="M439 159.500C430 159.500 418 164 413 176C410 186 410 194 412 200C416 210 430 212 445 211C456 210 464 204 464 196C464 184 461 172 456 165C452 161 446 159.500 439 159.500Z"/>
</g>
<g filter="url(#bl)" fill="none" stroke="#dedede" stroke-width="1.800" stroke-linecap="round">
<path d="M492 198C486 184 484 172 489 162"/>
<path d="M517 211C508 195 502 178 496 164"/>
<path d="M543 211C536 196 524 176 508 162"/>
<path d="M416 203C412 188 420 172 432 164"/>
<path d="M462 200C462 186 456 172 449 165"/>
</g>
<path d="M467 152C468 145 478 143 485 145C491 147 492 153 489 158C485 164 474 165 469 161C466 158 466 155 467 152Z" fill="#f9f9f9" stroke="#dcdcdc" stroke-width="0.600"/>
<!-- spots -->
<g filter="url(#bl2)" fill="#b3a38f"><ellipse cx="433" cy="199" rx="2.200" ry="1.400"/><ellipse cx="447" cy="197" rx="1.400" ry="1.100"/><ellipse cx="376" cy="169" rx="1.300" ry="1"/><ellipse cx="381" cy="136" rx="1.200" ry="0.800"/><ellipse cx="552" cy="126" rx="1.500" ry="1"/></g>
</svg></div>
  <div id="panel" class="abs">
    <div class="abs back"><svg class="abs" style="left:4px;top:3px;width:4px;height:6px" viewBox="0 0 4 6"><path d="M3.200 0.500L0.800 3L3.200 5.500" fill="none" stroke="#3f8fe8" stroke-width="1.100"/></svg><span class="abs" style="left:9.500px;top:2.500px">Zurück</span></div>
    <div class="abs hdr"><span class="abs" style="left:5px;top:3.500px">Anpassungen</span></div>
    <svg class="abs" style="left:23.500px;top:36px;width:21px;height:13px" viewBox="0 0 21 13"><path d="M0.700 6.500Q10.500 -4.600 20.300 6.500Q10.500 17.600 0.700 6.500Z" fill="none" stroke="#f4f4f4" stroke-width="1.300" stroke-linejoin="round"/><circle cx="10.500" cy="6.500" r="3.200" fill="none" stroke="#f4f4f4" stroke-width="2.600"/></svg>
    <span class="abs lbl" style="left:-2.5px;top:54.5px">Rote-Augen-Korrektur</span>
    <svg class="abs" style="left:91px;top:33px;width:20px;height:19px" viewBox="0 0 20 19"><g fill="none" stroke="#f4f4f4" stroke-width="1.700"><circle cx="3.800" cy="10" r="2.500"/><circle cx="9.200" cy="15.200" r="2.500"/></g><path d="M7.800 12.800L10.800 13.800L16.800 2L14.800 0.200C12 4 9.500 8.500 7.800 12.800Z" fill="#f4f4f4"/><path d="M5.200 8L6.200 11.200L19.600 5.800L18.600 3.200C13.500 4.400 9 6 5.200 8Z" fill="#f4f4f4"/><circle cx="10.700" cy="8.600" r="0.700" fill="#303034"/></svg>
    <span class="abs lbl" style="left:64.0px;top:54.5px">Zuschneiden</span>
    <svg class="abs" style="left:24px;top:66px;width:20px;height:19px" viewBox="0 0 20 19"><g fill="none" stroke="#f4f4f4" stroke-width="0.900" stroke-dasharray="1.400 0.900"><circle cx="6.300" cy="5" r="3.500"/><path d="M0.800 18.500v-4.500c0-3 2-4.300 3.500-4.600h4c1.500 0.300 3.500 1.600 3.500 4.600v4.500z"/></g><circle cx="15.400" cy="7" r="3" fill="#f4f4f4"/><path d="M13.600 9.500h3.600l1.300 2.500v7h-5.200v-7z" fill="#f4f4f4"/></svg>
    <span class="abs lbl" style="left:-2.5px;top:88.5px">Freistellen</span>
    <svg class="abs" style="left:91.0px;top:67.0px;width:19px;height:18px" viewBox="0 0 19 18"><rect x="3" y="1" width="13" height="5.500" fill="none" stroke="#f4f4f4" stroke-width="1.300"/><rect x="0.500" y="8.200" width="18" height="1.300" fill="#f4f4f4"/><rect x="2.400" y="11.200" width="14.200" height="6" fill="#f4f4f4"/></svg>
    <span class="abs lbl" style="left:64.0px;top:88.5px">An X-Achse spiegeln</span>
    <svg class="abs" style="left:24.5px;top:100.0px;width:19px;height:20px" viewBox="0 0 19 20"><rect x="1" y="3.500" width="5.300" height="12.700" fill="none" stroke="#f4f4f4" stroke-width="1.300"/><rect x="8.600" y="0.300" width="1.400" height="19" fill="#c9c9cd"/><rect x="12" y="2.900" width="6.800" height="13.900" fill="#f4f4f4"/></svg>
    <span class="abs lbl" style="left:-2.5px;top:122.0px">An Y-Achse spiegeln</span>
    <svg class="abs" style="left:91.0px;top:101.5px;width:19px;height:17px" viewBox="0 0 19 17"><g fill="none" stroke="#f4f4f4" stroke-width="1.700"><path d="M2.600 6.700A7.300 7.300 0 0 1 16.500 5"/><path d="M16.900 11A7.300 7.300 0 0 1 3 12.700"/></g><path d="M0.300 10.400L19 7" stroke="#f4f4f4" stroke-width="1.600"/></svg>
    <span class="abs lbl" style="left:64.0px;top:122.0px">Horizont korrigieren</span>
    <svg class="abs" style="left:24.0px;top:133.5px;width:20px;height:20px" viewBox="0 0 20 20"><circle cx="10" cy="10" r="4.600" fill="none" stroke="#f4f4f4" stroke-width="1.200"/><path d="M10 5.400A4.600 4.600 0 0 1 10 14.600Z" fill="#f4f4f4"/><path d="M17.00 10.00L19.20 10.00" stroke="#f4f4f4" stroke-width="1.600" stroke-linecap="round"/><path d="M14.95 14.95L16.51 16.51" stroke="#f4f4f4" stroke-width="1.600" stroke-linecap="round"/><path d="M10.00 17.00L10.00 19.20" stroke="#f4f4f4" stroke-width="1.600" stroke-linecap="round"/><path d="M5.05 14.95L3.49 16.51" stroke="#f4f4f4" stroke-width="1.600" stroke-linecap="round"/><path d="M3.00 10.00L0.80 10.00" stroke="#f4f4f4" stroke-width="1.600" stroke-linecap="round"/><path d="M5.05 5.05L3.49 3.49" stroke="#f4f4f4" stroke-width="1.600" stroke-linecap="round"/><path d="M10.00 3.00L10.00 0.80" stroke="#f4f4f4" stroke-width="1.600" stroke-linecap="round"/><path d="M14.95 5.05L16.51 3.49" stroke="#f4f4f4" stroke-width="1.600" stroke-linecap="round"/></svg>
    <span class="abs lbl" style="left:-2.5px;top:155.5px">Helligkeit &amp; Kontrast</span>
    <svg class="abs" style="left:94.0px;top:139.0px;width:13px;height:11px" viewBox="0 0 13 11"><rect x="0" y="0" width="13" height="11" fill="#f4f4f4"/><path d="M1 8.500L4 5.500L6 7L9.500 3L12 6" fill="none" stroke="#2e2e32" stroke-width="1.200"/></svg>
    <span class="abs lbl" style="left:64.0px;top:155.5px">Hintergrundbild</span>
    <svg class="abs" style="left:29.0px;top:168.0px;width:11px;height:18px" viewBox="0 0 11 18"><path d="M5.500 0.300C7.500 4 11 8 11 12.300C11 15.500 8.600 18 5.500 18C2.400 18 0 15.500 0 12.300C0 8 3.500 4 5.500 0.300Z" fill="#f4f4f4"/><path d="M9 11.500C9 14 7.500 15.800 5 16" fill="none" stroke="#2e2e32" stroke-width="1"/></svg>
    <span class="abs lbl" style="left:-2.0px;top:189.5px">Weichzeichner</span>
    <div class="abs row sel" style="top:303px"><svg class="abs" style="left:6px;top:3px;width:6px;height:6px" viewBox="0 0 6 6"><path d="M1 5L4.500 1.500" stroke="#d8d8dc" stroke-width="1.200"/></svg>Anpassungen</div>
    <div class="abs row" style="top:316px"><svg class="abs" style="left:6px;top:3px;width:6px;height:6px" viewBox="0 0 6 6"><circle cx="3" cy="3" r="1.700" fill="none" stroke="#e8e8e8" stroke-width="1"/><path d="M0 3h0.800M5.200 3h0.800M3 0v0.800M3 5.200v0.800" stroke="#e8e8e8" stroke-width="0.800"/></svg>Bildoptimierungen</div>
    <div class="abs row" style="top:329px"><svg class="abs" style="left:6px;top:3px;width:6px;height:6px" viewBox="0 0 6 6"><circle cx="3" cy="3" r="2.300" fill="none" stroke="#e8e8e8" stroke-width="1.100"/><circle cx="3.600" cy="2.400" r="0.800" fill="#e8e8e8"/></svg>Farbeffekte</div>
    <div class="abs row" style="top:342px"><svg class="abs" style="left:6px;top:3px;width:6px;height:6px" viewBox="0 0 6 6"><path d="M0.500 0.500h3v3h-3zM3 3l2.500 2.500" fill="none" stroke="#e8e8e8" stroke-width="1.100"/></svg>Stilisierungseffekte</div>
    <div class="abs row" style="top:355px"><svg class="abs" style="left:6px;top:3px;width:6px;height:6px" viewBox="0 0 6 6"><rect x="0.500" y="0.500" width="4" height="3.500" fill="none" stroke="#e8e8e8" stroke-width="0.900"/><rect x="2" y="2" width="4" height="3.500" fill="#e8e8e8"/></svg>Fotokünstlereffekte</div>
  </div>
  <div id="bbar" class="abs"><svg class="abs" style="left:0;top:0;width:644px;height:20px" viewBox="150 405 644 20">
<g fill="none" stroke="#b4b4b8" stroke-width="1.300"><circle cx="401.500" cy="413.500" r="3"/><path d="M399.300 415.800L395 420.300"/><circle cx="456.500" cy="413.500" r="3"/><path d="M454.300 415.800L450 420.300"/></g>
<circle cx="404.800" cy="418.600" r="2.300" fill="#dcdcdc"/><path d="M403.600 418.600h2.400" stroke="#555" stroke-width="0.700"/>
<circle cx="459.800" cy="418.600" r="2.300" fill="#dcdcdc"/><path d="M458.600 418.600h2.400M459.800 417.400v2.400" stroke="#555" stroke-width="0.700"/>
<path d="M412 415.700H445.500" stroke="#a6a6aa" stroke-width="0.800"/><circle cx="416.500" cy="415.700" r="2.300" fill="#8c8c90"/>
<g fill="#b4b4b8">
<path d="M468.300 412.200h1.200v7h-1.200zM472.700 412.200v7l-3.200-3.500z"/>
<path d="M486.200 412.200v7l-3.600-3.500z"/>
<path d="M497 412.200v7l3.600-3.500z"/>
<path d="M510.300 412.200v7l3.200-3.500zM513.500 412.200h1.200v7h-1.200z"/>
</g>
<rect x="523.500" y="412" width="8.500" height="8.500" fill="#57575b"/><path d="M524 420L531.500 412.500" stroke="#4a4a4e" stroke-width="1.500"/>
<g fill="none" stroke="#b4b4b8" stroke-width="1">
<path d="M537 413v-2.500h2.500M537.200 410.700l2.600 2.600"/>
<path d="M548 413v-2.500h-2.500M547.800 410.700l-2.600 2.600"/>
<path d="M537 418.500v2.500h2.500M537.200 420.800l2.600-2.600"/>
<path d="M548 418.500v2.500h-2.500M547.800 420.800l-2.600-2.600"/>
</g>
</svg></div>
</div>
<div id="task" class="abs">
<div class="abs" style="left:52px;top:0;width:26px;height:22px;background:#36373c"></div>
<div class="abs" style="left:155px;top:0;width:26px;height:22px;background:#45423f"></div>
<div class="abs" style="left:156px;top:21px;width:24px;height:1px;background:#c9b4b0"></div>
<svg class="abs" style="left:0;top:0;width:800px;height:22px" viewBox="0 428 800 22">
<g fill="#f0f0f0"><path d="M8 437.200l3.800-.5v3.500H8zM12.400 436.600l4.600-.7v4.300h-4.600zM8 440.800h3.800v3.500l-3.800-.5zM12.400 440.800H17v4.300l-4.600-.7z"/></g>
<g fill="none" stroke="#f0f0f0" stroke-width="1"><rect x="35" y="436" width="5" height="8"/><path d="M33 437.500v5M42 437.500v5M40 440h2.500"/></g>
<path d="M58 435.500h4.500l1 1.200H70v8.300H58z" fill="#f3c64b"/><rect x="58" y="438" width="12" height="7" fill="#f8dc7c"/><rect x="60.500" y="440.500" width="7" height="4.500" fill="#5aa7e0"/><rect x="62" y="442" width="4" height="3" fill="#f5f0dc"/>
<rect x="84.500" y="434.500" width="11" height="10.500" fill="#ddd6c8"/><rect x="86" y="436" width="8" height="7.500" fill="#e8762c"/><circle cx="90" cy="440" r="2.600" fill="#f6c23a"/><rect x="91" y="433.800" width="5" height="5" fill="#3f9ad6"/><rect x="83.800" y="441" width="4.600" height="4.600" fill="#6cb33f"/>
<g id="cw"><rect x="109.500" y="434" width="12.500" height="11.500" fill="#e9ecef"/><circle cx="116" cy="437.500" r="2.300" fill="#d9a78c"/><path d="M112 443c0-3 8-3 8 0z" fill="#5b7fa0"/><rect x="109.500" y="442.800" width="12.500" height="3" fill="#c4161c"/><path d="M114 434h4l-1 2h-2z" fill="#b8744a"/></g>
<use href="#cw" x="51.500"/>
<path d="M136.500 441.500c0-4 2.500-6.700 6-6.700 3.300 0 5.300 2.300 5.300 5.400v1.100h-7.600c.2 1.700 1.600 2.600 3.500 2.600 1.400 0 2.600-.4 3.600-1v2.300c-1.100.6-2.500.9-4.100.9-3.900 0-6.700-2-6.700-4.600zm3.700-1.700h4.500c0-1.500-.8-2.500-2.200-2.500-1.300 0-2.100 1-2.300 2.500z" fill="#2b86d9"/>
<g fill="none" stroke="#f0f0f0" stroke-width="0.900"><path d="M660.500 440.800l3.200-3.200 3.200 3.200"/><rect x="677" y="437.500" width="8" height="4"/><path d="M676 438.700v1.600"/>
<path d="M694 441.800a6.500 6.500 0 0 1 6.500-5.300"/><path d="M696 442a4 4 0 0 1 4.300-3"/><path d="M698 442.200a2 2 0 0 1 2.200-1.200"/>
<path d="M709.500 438.700h1.600l2-1.700v5.600l-2-1.700h-1.600z"/><path d="M714.800 438.500l2.400 2.800M717.200 438.500l-2.400 2.800"/>
<circle cx="730.500" cy="442" r="1.900"/><circle cx="735.500" cy="437.500" r="1.900"/><path d="M731.800 440.700l2.400-2"/></g>
</svg>
<div class="abs" style="left:797px;top:0;width:1px;height:22px;background:#4a4a4e"></div>
<span class="abs tt" style="left:747px;top:7.500px">DEU</span>
<span class="abs tt" style="left:772px;top:2.500px">22:21</span>
<span class="abs tt" style="left:765px;top:12.500px">17.12.2018</span>
</div>
<div class="abs" id="tip"><span>Explorer</span></div>
</body>
</html>
